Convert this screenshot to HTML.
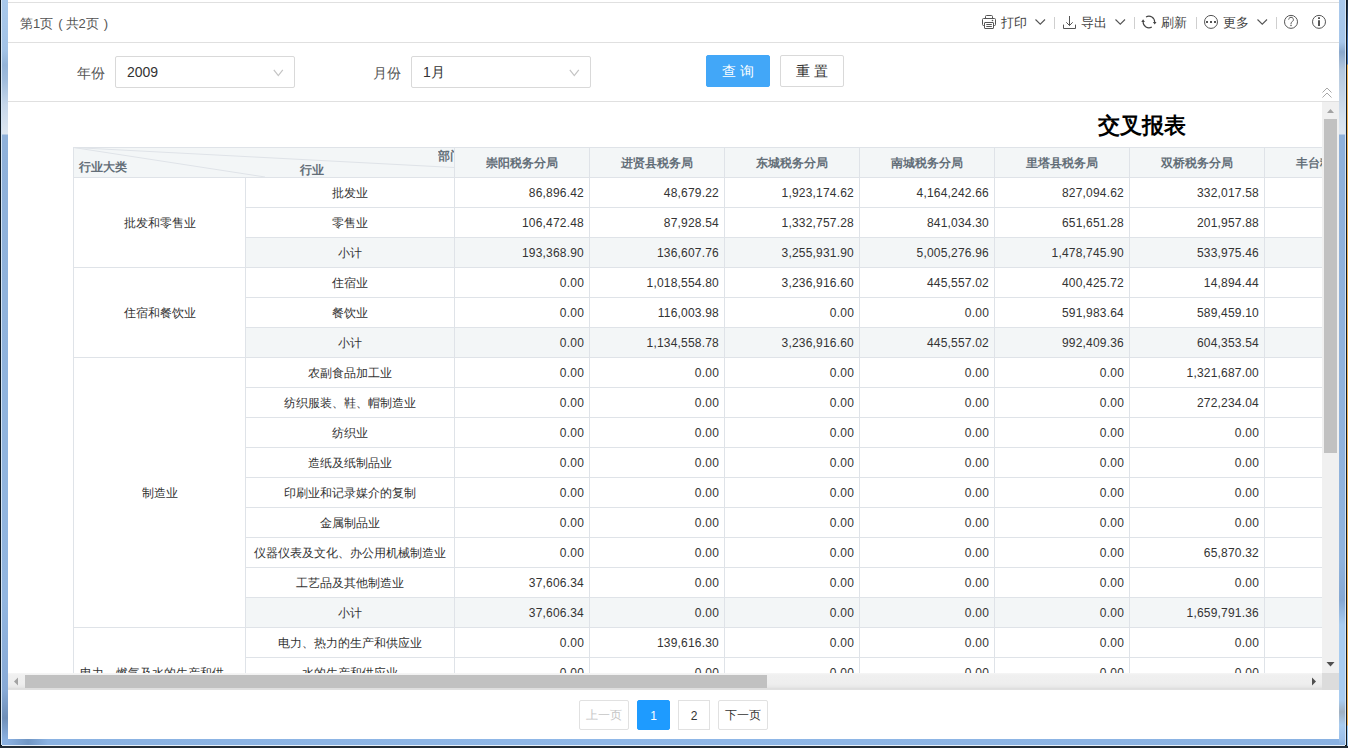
<!DOCTYPE html>
<html><head><meta charset="utf-8">
<style>
*{box-sizing:border-box}
html,body{margin:0;padding:0;width:1348px;height:748px;overflow:hidden;background:#2b3540;font-family:"Liberation Sans",sans-serif}
.abs{position:absolute}
#frameL{position:absolute;left:0;top:0;width:8px;height:748px;background:#0d1822}
#frameL i,#frameR i{position:absolute;top:0;height:745px;display:block}
#frameR{position:absolute;left:1339px;top:0;width:9px;height:748px;background:#0d1822}
#frameB{position:absolute;left:0;top:739px;width:1348px;height:9px;background:transparent}
#page{position:absolute;left:8px;top:0;width:1331px;height:739px;background:#fff;overflow:hidden}
.line{position:absolute;height:1px;background:#e0e0e0}
#tb{position:absolute;left:0;top:0;width:1331px;height:43px}
.tbt{position:absolute;top:15px;font-size:13px;color:#444;line-height:16px;white-space:nowrap}
.sep{position:absolute;top:17px;width:1px;height:12px;background:#cfcfcf}
.lbl{position:absolute;font-size:14px;color:#555;line-height:16px}
.sel{position:absolute;height:32px;border:1px solid #d9d9d9;border-radius:2px;background:#fff}
.sel span{position:absolute;left:11px;top:7px;font-size:14px;color:#333;line-height:16px}
.btn{position:absolute;height:32px;border-radius:2px;font-size:14px;text-align:center;line-height:30px;letter-spacing:4px;padding-left:4px}
#scroll{position:absolute;left:0;top:102px;width:1314px;height:571px;overflow:hidden}
#tbl{position:absolute;left:-8px;top:-102px;width:1500px;height:900px}
.hd{position:absolute;background:#f3f6f7}
.sub{position:absolute;background:#f3f6f7}
.hl{position:absolute;height:1px;background:#dfe3e8}
.vl{position:absolute;width:1px;background:#dfe3e8}
.ht{position:absolute;height:29px;line-height:29px;text-align:center;font-size:12px;font-weight:bold;color:#636e78;white-space:nowrap;overflow:hidden}
.ct{position:absolute;height:29px;line-height:29px;text-align:center;font-size:12px;color:#333;white-space:nowrap}
.nt{position:absolute;height:29px;line-height:29px;text-align:right;padding-right:5px;letter-spacing:0.2px;font-size:12px;color:#333;white-space:nowrap}
.gt{position:absolute;text-align:center;font-size:12px;color:#333;white-space:nowrap}
.pg{position:absolute;top:700px;height:30px;border:1px solid #e1e1e1;border-radius:2px;font-size:12px;color:#333;text-align:center;line-height:28px;background:#fff}
</style></head><body>
<div id="frameL"><i style="left:1px;width:1px;background:#d6e6f6"></i><i style="left:2px;width:6px;background:linear-gradient(#a9c9ec 0px,#a3c3e6 50px,#94b4d8 65px,#a0bcdc 80px,#c6d7ea 105px,#dde6f0 134px,#8fb1da 135px,#90b3dc 300px,#92b6e0 600px,#88aad6 690px,#6f8fb8 718px,#8ab0e0 739px)"></i></div>
<div id="frameR"><i style="left:0;width:6px;background:linear-gradient(#a9c9ec 0px,#a6c6ea 42px,#8aa8cc 52px,#b4c8de 70px,#d6e2ee 120px,#dde6f0 134px,#8fb1da 135px,#90b3dc 560px,#86a8d2 600px,#a8ccf0 625px,#a8ccf0 700px,#a0b0c0 712px,#a8ccf0 725px,#9cc0ea 739px,#8ab2e2 745px)"></i><i style="left:6px;width:1px;background:#d6e6f6"></i><i style="left:8px;width:1px;height:748px;background:linear-gradient(#1a2838 0px,#4a78b8 42px,#4a78b8 64px,#f0b458 65px,#f0b458 725px,#9ec8ee 726px,#9ec8ee 748px)"></i></div>
<div id="frameB"><i style="position:absolute;left:8px;top:0;width:1331px;height:6px;display:block;background:linear-gradient(90deg,#8ab0e0,#7096c4 20px,#8ab2e2 40px,#90b8e8 600px,#8ab2e2 1340px)"></i><i style="position:absolute;left:2px;top:6px;width:1343px;height:1px;display:block;background:#e6f0fa"></i></div>
<div class="abs" style="left:0;top:746px;width:1348px;height:2px;background:#222c36"></div>
<div id="page">
  <div class="line" style="left:0;top:2px;width:1331px"></div>
  <div class="tbt" style="left:12px;top:16px;color:#555">第1页<span style="margin-left:5px;margin-right:3px">(</span>共2页<span style="margin-left:5px">)</span></div>
  <!-- toolbar right -->
  <svg class="abs" style="left:970px;top:12px" width="22" height="20" viewBox="0 0 22 20" fill="none" stroke="#555" stroke-width="1">
    <path d="M7.5 6.5V4.5Q7.5 3.5 8.5 3.5H13.5Q14.5 3.5 14.5 4.5V6.5"/>
    <path d="M6.5 13.5H5.5Q4.5 13.5 4.5 12.5V7.5Q4.5 6.5 5.5 6.5H16.5Q17.5 6.5 17.5 7.5V12.5Q17.5 13.5 16.5 13.5H15.5"/>
    <path d="M7 10.5H15Q15.5 10.5 15.5 11V16Q15.5 16.5 15 16.5H7Q6.5 16.5 6.5 16V11Q6.5 10.5 7 10.5Z"/>
    <path d="M8.3 12.5H13.8M8.3 14.5H13.8"/><circle cx="14.5" cy="8.5" r="0.8" fill="#555" stroke="none"/>
  </svg>
  <div class="tbt" style="left:993px">打印</div>
  <svg class="abs" style="left:1026px;top:17px" width="13" height="9" viewBox="0 0 13 9" fill="none" stroke="#555" stroke-width="1.1"><path d="M1.5 2.5L6.25 7.25L11 2.5"/></svg>
  <div class="sep" style="left:1046px"></div>
  <svg class="abs" style="left:1050px;top:12px" width="22" height="20" viewBox="0 0 22 20" fill="none" stroke="#555" stroke-width="1">
    <path d="M11.5 4V13.5M8.3 10.3L11.5 13.5L14.7 10.3M5.5 12.6V16.5H17.5V12.6"/></svg>
  <div class="tbt" style="left:1073px">导出</div>
  <svg class="abs" style="left:1106px;top:17px" width="13" height="9" viewBox="0 0 13 9" fill="none" stroke="#555" stroke-width="1.1"><path d="M1.5 2.5L6.25 7.25L11 2.5"/></svg>
  <div class="sep" style="left:1126px"></div>
  <svg class="abs" style="left:1130px;top:12px" width="22" height="20" viewBox="0 0 22 20" fill="none" stroke="#444" stroke-width="1.1">
    <path d="M8 4.98A5.8 5.8 0 0 1 16.7 10.2"/><path d="M13.8 15.02A5.8 5.8 0 0 1 5.1 9.8"/>
    <path d="M14.9 10.1H18.5L16.7 12.6Z M3.3 9.9H6.9L5.1 7.3Z" fill="#444" stroke="none"/></svg>
  <div class="tbt" style="left:1153px">刷新</div>
  <div class="sep" style="left:1188px"></div>
  <svg class="abs" style="left:1192px;top:12px" width="22" height="20" viewBox="0 0 22 20" fill="none" stroke="#555" stroke-width="1">
    <circle cx="11" cy="9.9" r="6.5"/><path d="M6 9h2v2H6zM10 9h2v2h-2zM14 9h2v2h-2z" fill="#555" stroke="none"/></svg>
  <div class="tbt" style="left:1215px">更多</div>
  <svg class="abs" style="left:1248px;top:17px" width="13" height="9" viewBox="0 0 13 9" fill="none" stroke="#555" stroke-width="1.1"><path d="M1.5 2.5L6.25 7.25L11 2.5"/></svg>
  <div class="sep" style="left:1268px"></div>
  <svg class="abs" style="left:1272px;top:12px" width="22" height="20" viewBox="0 0 22 20" fill="none" stroke="#555" stroke-width="1">
    <circle cx="11" cy="9.85" r="6.5"/><path d="M8.7 7.6A2.35 2.35 0 1 1 12.3 9.6Q11 10.4 11 11.8V12.2"/><circle cx="11" cy="13.4" r="0.75" fill="#555" stroke="none"/></svg>
  <svg class="abs" style="left:1300px;top:12px" width="22" height="20" viewBox="0 0 22 20" fill="none" stroke="#555" stroke-width="1">
    <circle cx="11" cy="9.85" r="6.5"/><path d="M10 5.2h2v1.8h-2zM10 8.3h2v5.6h-2z" fill="#555" stroke="none"/></svg>
  <div class="line" style="left:0;top:42px;width:1331px"></div>

  <!-- form -->
  <div class="lbl" style="left:69px;top:65px">年份</div>
  <div class="sel" style="left:107px;top:56px;width:180px"><span>2009</span>
    <svg class="abs" style="left:157px;top:12px" width="12" height="8" viewBox="0 0 12 8" fill="none" stroke="#c4c4c4" stroke-width="1.2"><path d="M0.8 0.8L5.3 6.6L9.8 0.8"/></svg></div>
  <div class="lbl" style="left:365px;top:65px">月份</div>
  <div class="sel" style="left:403px;top:56px;width:180px"><span>1月</span>
    <svg class="abs" style="left:157px;top:12px" width="12" height="8" viewBox="0 0 12 8" fill="none" stroke="#c4c4c4" stroke-width="1.2"><path d="M0.8 0.8L5.3 6.6L9.8 0.8"/></svg></div>
  <div class="btn" style="left:698px;top:55px;width:64px;background:#42a7f8;color:#fff;border:1px solid #42a7f8">查询</div>
  <div class="btn" style="left:772px;top:55px;width:64px;background:#fff;color:#333;border:1px solid #d9d9d9">重置</div>
  <div class="line" style="left:0;top:101px;width:1331px"></div>
  <svg class="abs" style="left:1313px;top:87px" width="12" height="12" viewBox="0 0 12 12" fill="none" stroke="#a8a8a8" stroke-width="1"><path d="M1.5 5.5L6 1l4.5 4.5M1.5 10.5L6 6l4.5 4.5"/></svg>

  <div id="scroll">
    <div id="tbl">
      <div class="abs" style="left:1098px;top:112px;font-size:22px;font-weight:bold;color:#000;line-height:28px">交叉报表</div>
      <!-- corner header -->
      
      <div class="hd" style="left:73px;top:147px;width:1326px;height:30px"></div>
<div class="sub" style="left:245px;top:237px;width:1154px;height:30px"></div>
<div class="sub" style="left:245px;top:327px;width:1154px;height:30px"></div>
<div class="sub" style="left:245px;top:597px;width:1154px;height:30px"></div>
<div class="hl" style="left:73px;top:147px;width:1326px"></div>
<div class="hl" style="left:73px;top:177px;width:1326px"></div>
<div class="hl" style="left:245px;top:207px;width:1154px"></div>
<div class="hl" style="left:245px;top:237px;width:1154px"></div>
<div class="hl" style="left:73px;top:267px;width:1326px"></div>
<div class="hl" style="left:245px;top:297px;width:1154px"></div>
<div class="hl" style="left:245px;top:327px;width:1154px"></div>
<div class="hl" style="left:73px;top:357px;width:1326px"></div>
<div class="hl" style="left:245px;top:387px;width:1154px"></div>
<div class="hl" style="left:245px;top:417px;width:1154px"></div>
<div class="hl" style="left:245px;top:447px;width:1154px"></div>
<div class="hl" style="left:245px;top:477px;width:1154px"></div>
<div class="hl" style="left:245px;top:507px;width:1154px"></div>
<div class="hl" style="left:245px;top:537px;width:1154px"></div>
<div class="hl" style="left:245px;top:567px;width:1154px"></div>
<div class="hl" style="left:245px;top:597px;width:1154px"></div>
<div class="hl" style="left:73px;top:627px;width:1326px"></div>
<div class="hl" style="left:245px;top:657px;width:1154px"></div>
<div class="hl" style="left:245px;top:687px;width:1154px"></div>
<div class="hl" style="left:245px;top:717px;width:1154px"></div>
<div class="vl" style="left:73px;top:147px;height:570px"></div>
<div class="vl" style="left:245px;top:177px;height:540px"></div>
<div class="vl" style="left:454px;top:147px;height:570px"></div>
<div class="vl" style="left:589px;top:147px;height:570px"></div>
<div class="vl" style="left:724px;top:147px;height:570px"></div>
<div class="vl" style="left:859px;top:147px;height:570px"></div>
<div class="vl" style="left:994px;top:147px;height:570px"></div>
<div class="vl" style="left:1129px;top:147px;height:570px"></div>
<div class="vl" style="left:1264px;top:147px;height:570px"></div>
<div class="ht" style="left:455px;top:149px;width:134px">崇阳税务分局</div>
<div class="ht" style="left:590px;top:149px;width:134px">进贤县税务局</div>
<div class="ht" style="left:725px;top:149px;width:134px">东城税务分局</div>
<div class="ht" style="left:860px;top:149px;width:134px">南城税务分局</div>
<div class="ht" style="left:995px;top:149px;width:134px">里塔县税务局</div>
<div class="ht" style="left:1130px;top:149px;width:134px">双桥税务分局</div>
<div class="ht" style="left:1265px;top:149px;width:134px">丰台税务分局</div>
<div class="ct" style="left:246px;top:179px;width:208px">批发业</div>
<div class="nt" style="left:455px;top:179px;width:134px">86,896.42</div>
<div class="nt" style="left:590px;top:179px;width:134px">48,679.22</div>
<div class="nt" style="left:725px;top:179px;width:134px">1,923,174.62</div>
<div class="nt" style="left:860px;top:179px;width:134px">4,164,242.66</div>
<div class="nt" style="left:995px;top:179px;width:134px">827,094.62</div>
<div class="nt" style="left:1130px;top:179px;width:134px">332,017.58</div>
<div class="ct" style="left:246px;top:209px;width:208px">零售业</div>
<div class="nt" style="left:455px;top:209px;width:134px">106,472.48</div>
<div class="nt" style="left:590px;top:209px;width:134px">87,928.54</div>
<div class="nt" style="left:725px;top:209px;width:134px">1,332,757.28</div>
<div class="nt" style="left:860px;top:209px;width:134px">841,034.30</div>
<div class="nt" style="left:995px;top:209px;width:134px">651,651.28</div>
<div class="nt" style="left:1130px;top:209px;width:134px">201,957.88</div>
<div class="ct" style="left:246px;top:239px;width:208px">小计</div>
<div class="nt" style="left:455px;top:239px;width:134px">193,368.90</div>
<div class="nt" style="left:590px;top:239px;width:134px">136,607.76</div>
<div class="nt" style="left:725px;top:239px;width:134px">3,255,931.90</div>
<div class="nt" style="left:860px;top:239px;width:134px">5,005,276.96</div>
<div class="nt" style="left:995px;top:239px;width:134px">1,478,745.90</div>
<div class="nt" style="left:1130px;top:239px;width:134px">533,975.46</div>
<div class="ct" style="left:246px;top:269px;width:208px">住宿业</div>
<div class="nt" style="left:455px;top:269px;width:134px">0.00</div>
<div class="nt" style="left:590px;top:269px;width:134px">1,018,554.80</div>
<div class="nt" style="left:725px;top:269px;width:134px">3,236,916.60</div>
<div class="nt" style="left:860px;top:269px;width:134px">445,557.02</div>
<div class="nt" style="left:995px;top:269px;width:134px">400,425.72</div>
<div class="nt" style="left:1130px;top:269px;width:134px">14,894.44</div>
<div class="ct" style="left:246px;top:299px;width:208px">餐饮业</div>
<div class="nt" style="left:455px;top:299px;width:134px">0.00</div>
<div class="nt" style="left:590px;top:299px;width:134px">116,003.98</div>
<div class="nt" style="left:725px;top:299px;width:134px">0.00</div>
<div class="nt" style="left:860px;top:299px;width:134px">0.00</div>
<div class="nt" style="left:995px;top:299px;width:134px">591,983.64</div>
<div class="nt" style="left:1130px;top:299px;width:134px">589,459.10</div>
<div class="ct" style="left:246px;top:329px;width:208px">小计</div>
<div class="nt" style="left:455px;top:329px;width:134px">0.00</div>
<div class="nt" style="left:590px;top:329px;width:134px">1,134,558.78</div>
<div class="nt" style="left:725px;top:329px;width:134px">3,236,916.60</div>
<div class="nt" style="left:860px;top:329px;width:134px">445,557.02</div>
<div class="nt" style="left:995px;top:329px;width:134px">992,409.36</div>
<div class="nt" style="left:1130px;top:329px;width:134px">604,353.54</div>
<div class="ct" style="left:246px;top:359px;width:208px">农副食品加工业</div>
<div class="nt" style="left:455px;top:359px;width:134px">0.00</div>
<div class="nt" style="left:590px;top:359px;width:134px">0.00</div>
<div class="nt" style="left:725px;top:359px;width:134px">0.00</div>
<div class="nt" style="left:860px;top:359px;width:134px">0.00</div>
<div class="nt" style="left:995px;top:359px;width:134px">0.00</div>
<div class="nt" style="left:1130px;top:359px;width:134px">1,321,687.00</div>
<div class="ct" style="left:246px;top:389px;width:208px">纺织服装、鞋、帽制造业</div>
<div class="nt" style="left:455px;top:389px;width:134px">0.00</div>
<div class="nt" style="left:590px;top:389px;width:134px">0.00</div>
<div class="nt" style="left:725px;top:389px;width:134px">0.00</div>
<div class="nt" style="left:860px;top:389px;width:134px">0.00</div>
<div class="nt" style="left:995px;top:389px;width:134px">0.00</div>
<div class="nt" style="left:1130px;top:389px;width:134px">272,234.04</div>
<div class="ct" style="left:246px;top:419px;width:208px">纺织业</div>
<div class="nt" style="left:455px;top:419px;width:134px">0.00</div>
<div class="nt" style="left:590px;top:419px;width:134px">0.00</div>
<div class="nt" style="left:725px;top:419px;width:134px">0.00</div>
<div class="nt" style="left:860px;top:419px;width:134px">0.00</div>
<div class="nt" style="left:995px;top:419px;width:134px">0.00</div>
<div class="nt" style="left:1130px;top:419px;width:134px">0.00</div>
<div class="ct" style="left:246px;top:449px;width:208px">造纸及纸制品业</div>
<div class="nt" style="left:455px;top:449px;width:134px">0.00</div>
<div class="nt" style="left:590px;top:449px;width:134px">0.00</div>
<div class="nt" style="left:725px;top:449px;width:134px">0.00</div>
<div class="nt" style="left:860px;top:449px;width:134px">0.00</div>
<div class="nt" style="left:995px;top:449px;width:134px">0.00</div>
<div class="nt" style="left:1130px;top:449px;width:134px">0.00</div>
<div class="ct" style="left:246px;top:479px;width:208px">印刷业和记录媒介的复制</div>
<div class="nt" style="left:455px;top:479px;width:134px">0.00</div>
<div class="nt" style="left:590px;top:479px;width:134px">0.00</div>
<div class="nt" style="left:725px;top:479px;width:134px">0.00</div>
<div class="nt" style="left:860px;top:479px;width:134px">0.00</div>
<div class="nt" style="left:995px;top:479px;width:134px">0.00</div>
<div class="nt" style="left:1130px;top:479px;width:134px">0.00</div>
<div class="ct" style="left:246px;top:509px;width:208px">金属制品业</div>
<div class="nt" style="left:455px;top:509px;width:134px">0.00</div>
<div class="nt" style="left:590px;top:509px;width:134px">0.00</div>
<div class="nt" style="left:725px;top:509px;width:134px">0.00</div>
<div class="nt" style="left:860px;top:509px;width:134px">0.00</div>
<div class="nt" style="left:995px;top:509px;width:134px">0.00</div>
<div class="nt" style="left:1130px;top:509px;width:134px">0.00</div>
<div class="ct" style="left:246px;top:539px;width:208px">仪器仪表及文化、办公用机械制造业</div>
<div class="nt" style="left:455px;top:539px;width:134px">0.00</div>
<div class="nt" style="left:590px;top:539px;width:134px">0.00</div>
<div class="nt" style="left:725px;top:539px;width:134px">0.00</div>
<div class="nt" style="left:860px;top:539px;width:134px">0.00</div>
<div class="nt" style="left:995px;top:539px;width:134px">0.00</div>
<div class="nt" style="left:1130px;top:539px;width:134px">65,870.32</div>
<div class="ct" style="left:246px;top:569px;width:208px">工艺品及其他制造业</div>
<div class="nt" style="left:455px;top:569px;width:134px">37,606.34</div>
<div class="nt" style="left:590px;top:569px;width:134px">0.00</div>
<div class="nt" style="left:725px;top:569px;width:134px">0.00</div>
<div class="nt" style="left:860px;top:569px;width:134px">0.00</div>
<div class="nt" style="left:995px;top:569px;width:134px">0.00</div>
<div class="nt" style="left:1130px;top:569px;width:134px">0.00</div>
<div class="ct" style="left:246px;top:599px;width:208px">小计</div>
<div class="nt" style="left:455px;top:599px;width:134px">37,606.34</div>
<div class="nt" style="left:590px;top:599px;width:134px">0.00</div>
<div class="nt" style="left:725px;top:599px;width:134px">0.00</div>
<div class="nt" style="left:860px;top:599px;width:134px">0.00</div>
<div class="nt" style="left:995px;top:599px;width:134px">0.00</div>
<div class="nt" style="left:1130px;top:599px;width:134px">1,659,791.36</div>
<div class="ct" style="left:246px;top:629px;width:208px">电力、热力的生产和供应业</div>
<div class="nt" style="left:455px;top:629px;width:134px">0.00</div>
<div class="nt" style="left:590px;top:629px;width:134px">139,616.30</div>
<div class="nt" style="left:725px;top:629px;width:134px">0.00</div>
<div class="nt" style="left:860px;top:629px;width:134px">0.00</div>
<div class="nt" style="left:995px;top:629px;width:134px">0.00</div>
<div class="nt" style="left:1130px;top:629px;width:134px">0.00</div>
<div class="ct" style="left:246px;top:659px;width:208px">水的生产和供应业</div>
<div class="nt" style="left:455px;top:659px;width:134px">0.00</div>
<div class="nt" style="left:590px;top:659px;width:134px">0.00</div>
<div class="nt" style="left:725px;top:659px;width:134px">0.00</div>
<div class="nt" style="left:860px;top:659px;width:134px">0.00</div>
<div class="nt" style="left:995px;top:659px;width:134px">0.00</div>
<div class="nt" style="left:1130px;top:659px;width:134px">0.00</div>
<div class="ct" style="left:246px;top:689px;width:208px">燃气生产和供应业</div>
<div class="nt" style="left:455px;top:689px;width:134px">0.00</div>
<div class="nt" style="left:590px;top:689px;width:134px">0.00</div>
<div class="nt" style="left:725px;top:689px;width:134px">0.00</div>
<div class="nt" style="left:860px;top:689px;width:134px">0.00</div>
<div class="nt" style="left:995px;top:689px;width:134px">0.00</div>
<div class="nt" style="left:1130px;top:689px;width:134px">0.00</div>
<div class="gt" style="left:74px;top:179px;width:171px;height:89px;line-height:89px">批发和零售业</div>
<div class="gt" style="left:74px;top:269px;width:171px;height:89px;line-height:89px">住宿和餐饮业</div>
<div class="gt" style="left:74px;top:359px;width:171px;height:269px;line-height:269px">制造业</div>
<div class="ct" style="left:80px;top:659px;text-align:left;width:160px">电力、燃气及水的生产和供<br>应业</div>
      <svg class="abs" style="left:73px;top:147px" width="382" height="31"><path d="M0.5 0.5L381 20.5M0.5 0.5L192 30" stroke="#dfe3e8" stroke-width="1" fill="none"/></svg>
      <div class="abs" style="left:79px;top:159px;font-size:12px;font-weight:bold;color:#636e78;line-height:16px">行业大类</div>
      <div class="abs" style="left:300px;top:162px;font-size:12px;font-weight:bold;color:#636e78;line-height:16px">行业</div>
      <div class="abs" style="left:438px;top:148px;width:16px;overflow:hidden;font-size:12px;font-weight:bold;color:#636e78;line-height:16px;white-space:nowrap">部门</div>
    </div>
  </div>
  <!-- vertical scrollbar -->
  <div class="abs" style="left:1314px;top:102px;width:17px;height:571px;background:#f0f0f0"></div>
  <div class="abs" style="left:1316px;top:119px;width:13px;height:334px;background:#c1c1c1"></div>
  <svg class="abs" style="left:1314px;top:102px" width="17" height="17"><path d="M5 11h7L8.5 7z" fill="#a3a3a3"/></svg>
  <svg class="abs" style="left:1314px;top:656px" width="17" height="17"><path d="M4.5 6h8L8.5 10.5z" fill="#505050"/></svg>
  <!-- horizontal scrollbar -->
  <div class="abs" style="left:0;top:673px;width:1314px;height:17px;background:linear-gradient(#f6f6f6 0px,#f0f0f0 2px,#eeeeee 11px,#e8e8e8 14px,#dcdcdc 16px,#e4e4e4 17px)"></div>
  <div class="abs" style="left:17px;top:675px;width:742px;height:13px;background:#c1c1c1"></div>
  <svg class="abs" style="left:0;top:673px" width="17" height="17"><path d="M6 8.5L10 4.5v8z" fill="#a3a3a3"/></svg>
  <svg class="abs" style="left:1297px;top:673px" width="17" height="17"><path d="M11 8.5L7 4.5v8z" fill="#505050"/></svg>
  <div class="abs" style="left:1314px;top:673px;width:17px;height:17px;background:#dcdcdc"></div>
  <!-- pagination -->
  <div class="pg" style="left:571px;width:50px;color:#c5c5c5">上一页</div>
  <div class="pg" style="left:629px;width:33px;background:#1e9bff;border-color:#1e9bff;color:#fff;line-height:28px;padding-top:1px">1</div>
  <div class="pg" style="left:670px;width:32px;line-height:28px;padding-top:1px;border-radius:0">2</div>
  <div class="pg" style="left:710px;width:50px">下一页</div>
</div>
</body></html>
